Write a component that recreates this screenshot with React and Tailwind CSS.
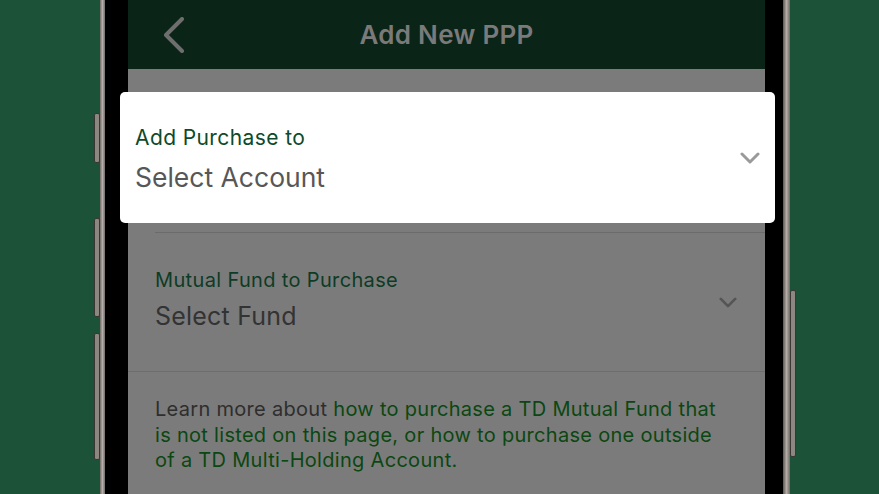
// App.jsx — Add New PPP screen, account picker highlighted

const Chevron = ({ className }) => (
  <svg viewBox="0 0 20 12" className={className} fill="none" stroke="currentColor" strokeWidth="3" strokeLinecap="round" strokeLinejoin="round">
    <path d="M2 2l8 8 8-8" />
  </svg>
);

// Side button bump on the phone edge
const SideBtn = ({ className }) => (
  <div className={`absolute w-[6px] rounded-[2px] border border-[#3a3633] bg-[#8d8782] ${className}`} />
);

export default function App() {
  return (
    <div className="relative flex w-[879px] h-[494px] overflow-hidden bg-[#1b5238] font-['Inter','Liberation_Sans',sans-serif]">
      {/* left bezel */}
      <div className="relative w-[100px] shrink-0">
        <SideBtn className="left-[94px] top-[113px] h-[50px]" />
        <SideBtn className="left-[94px] top-[218px] h-[99px]" />
        <SideBtn className="left-[94px] top-[333px] h-[127px]" />
      </div>
      <div className="w-[5px] shrink-0 bg-gradient-to-r from-[#6f6a66] via-[#b5aea8] to-[#6f6a66]" />
      <div className="w-[23px] shrink-0 bg-black" />

      {/* screen */}
      <div className="flex w-[637px] shrink-0 flex-col bg-[#7b7b7b]">
        <div className="flex h-[69px] shrink-0 items-center bg-[#0a2418] relative">
          <svg viewBox="0 0 22 36" className="ml-[35px] h-[36px] w-[22px] text-[#6e6e6e]" fill="none" stroke="currentColor" strokeWidth="4" strokeLinecap="round" strokeLinejoin="round">
            <path d="M19 2L3 18l16 16" />
          </svg>
          <div className="absolute inset-x-0 text-center text-[26px] tracking-[0.3px] font-semibold text-[#7a7a7a]">Add New PPP</div>
        </div>

        {/* first field (covered by highlight) */}
        <div className="ml-[27px] h-[164px] border-b border-[#6b6b6b]" />

        {/* second field */}
        <div className="flex h-[139px] items-center justify-between border-b border-[#6e6e6e] pl-[27px] pr-[28px]">
          <div className="flex flex-col -mt-[6px]">
            <span className="text-[20px] leading-[24px] tracking-[0.35px] text-[#0e3b25]">Mutual Fund to Purchase</span>
            <span className="mt-[9px] text-[25px] leading-[30px] tracking-[0.2px] text-[#333333]">Select Fund</span>
          </div>
          <Chevron className="h-[11px] w-[18px] text-[#555555]" />
        </div>

        <p className="pl-[27px] pr-[38px] pt-[25px] text-[20px] leading-[25.5px] tracking-[0.3px] text-[#2e2e2e]">
          Learn more about{' '}
          <span className="text-[#0b4711]">how to purchase a TD Mutual Fund that is not listed on this page, or how to purchase one outside of a TD Multi-Holding Account.</span>
        </p>
      </div>

      {/* right bezel */}
      <div className="w-[18px] shrink-0 bg-black" />
      <div className="w-[7px] shrink-0 bg-gradient-to-r from-[#5c5753] via-[#b3aca6] to-[#6f6a66]" />
      <div className="relative flex-1">
        <SideBtn className="left-[0px] top-[290px] h-[167px]" />
      </div>

      {/* highlighted account picker */}
      <div className="absolute left-[120px] top-[92px] flex h-[131px] w-[655px] items-center justify-between rounded-[5px] bg-white pl-[15px] pr-[15px]">
        <div className="flex flex-col pt-[2px]">
          <span className="text-[21px] leading-[26px] tracking-[0.4px] text-[#0d4a2c]">Add Purchase to</span>
          <span className="mt-[10px] text-[26.5px] leading-[32px] text-[#575757]">Select Account</span>
        </div>
        <Chevron className="h-[12px] w-[20px] text-[#9a9a9a]" />
      </div>
    </div>
  );
}
